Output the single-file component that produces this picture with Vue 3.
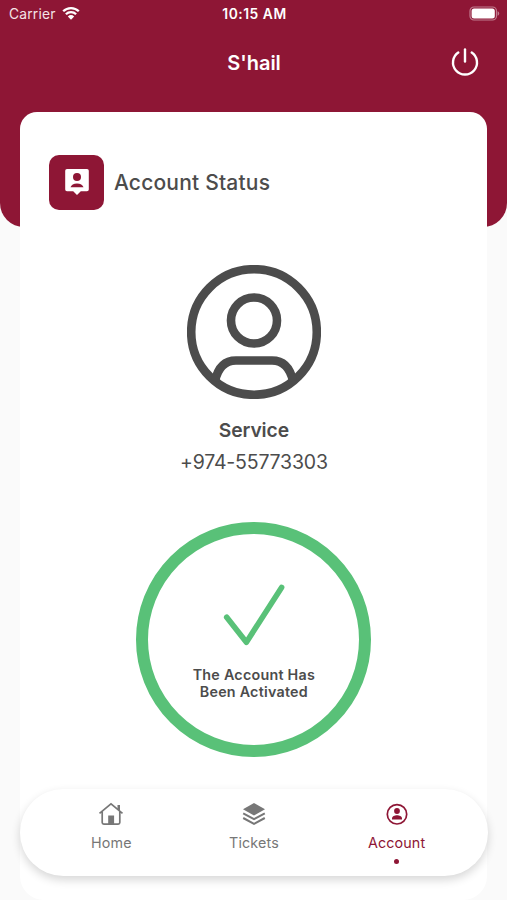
<script setup>
const tabs = [
  { id: 'home', label: 'Home' },
  { id: 'tickets', label: 'Tickets' },
  { id: 'account', label: 'Account' },
]
const activeTab = 'account'
</script>

<template>
  <div class="screen">
    <header class="top">
      <div class="status">
        <div class="carrier">
          <span>Carrier</span>
          <svg class="wifi" viewBox="0 0 18 14">
            <path d="M1.2 5.3a11 11 0 0 1 15.6 0" />
            <path d="M3.9 8.2a7.2 7.2 0 0 1 10.2 0" />
            <path class="solid" d="M9 13.8 5.8 10.4q3.2-2.7 6.4 0z" />
          </svg>
        </div>
        <span class="time">10:15 AM</span>
        <svg class="battery" viewBox="0 0 31 15">
          <rect class="shell" x="1" y="1" width="26.5" height="13" rx="4" />
          <rect class="charge" x="2.6" y="2.6" width="23.2" height="9.8" rx="2.5" />
          <path class="cap" d="M28.6 5.2q1.6.5 1.6 2.3t-1.6 2.3z" />
        </svg>
      </div>
      <div class="titlebar">
        <h1>S'hail</h1>
        <svg class="power" viewBox="0 0 28 28">
          <path d="M7.3 4.6A12 12 0 1 0 20.7 4.6" />
          <path d="M14 1.5v12" />
        </svg>
      </div>
    </header>

    <main class="card">
      <div class="heading">
        <div class="badge">
          <svg viewBox="0 0 24 26">
            <path class="paper" d="M2 0h20a1.8 1.8 0 0 1 1.8 1.8v18.6a1.8 1.8 0 0 1-1.8 1.8h-6.2L12 26l-3.8-3.8H2A1.8 1.8 0 0 1 .2 20.4V1.8A1.8 1.8 0 0 1 2 0z" />
            <circle cx="12" cy="8" r="4" />
            <path d="M5.5 18.3q1.3-3.900 6.500-3.900t6.500 3.900z" />
          </svg>
        </div>
        <h2>Account Status</h2>
      </div>

      <svg class="avatar" viewBox="0 0 134 134">
        <circle cx="67" cy="67" r="62.8" />
        <circle cx="67" cy="55.5" r="23" />
        <path d="M28 116C31 102.500 37.500 95.500 49 95.500H85C96.500 95.500 103 102.500 106 116" />
      </svg>
      <p class="service">Service</p>
      <p class="phone">+974-55773303</p>

      <div class="result">
        <svg class="check" viewBox="0 0 62 62">
          <path d="M3.7 33.3 23.4 58.2 58.6 3.4" />
        </svg>
        <p>The Account Has<br />Been Activated</p>
      </div>
    </main>

    <nav class="tabs">
      <div v-for="tab in tabs" :key="tab.id" class="tab" :class="{ active: tab.id === activeTab }">
        <svg v-if="tab.id === 'home'" viewBox="0 0 26 24">
          <path class="line" d="M1.5 11.3 13 1.8 24.5 11.3M4.2 9.6V20.5a1.6 1.6 0 0 0 1.6 1.6H20.2a1.6 1.6 0 0 0 1.6-1.6V9.6" />
          <path d="M19.5 3H22v6l-2.5-2zM10.2 13.5h5.900v8.500h-5.900z" />
        </svg>
        <svg v-else-if="tab.id === 'tickets'" viewBox="0 0 26 24">
          <path d="M13 1 24 7.200 13 13.400 2 7.200z" />
          <path class="line thin" d="M2.200 11.300 13 17.200 23.800 11.300M2.200 16 13 21.900 23.800 16" />
        </svg>
        <svg v-else viewBox="0 0 26 24">
          <circle class="line" cx="13" cy="12.300" r="9.700" />
          <circle cx="13" cy="9" r="2.900" />
          <path d="M8 17.600v-1.200c0-2 2.700-3.100 5-3.100s5 1.100 5 3.100v1.200z" />
        </svg>
        <span>{{ tab.label }}</span>
        <i v-if="tab.id === activeTab" class="dot"></i>
      </div>
    </nav>
  </div>
</template>

<style>
body {
  background: #fafafa;
}
</style>

<style scoped>
.screen {
  position: relative;
  width: 507px;
  height: 900px;
  overflow: hidden;
  background: #fafafa;
  color: #4c4c4c;
  font-family: Inter, "Liberation Sans", sans-serif;
}
h1, h2, p {
  margin: 0;
}
svg {
  display: block;
  flex: none;
}
.top {
  box-sizing: border-box;
  height: 227px;
  background: #8e1635;
  border-radius: 0 0 24px 24px;
  color: #fff;
}
.status {
  display: grid;
  grid-template-columns: 1fr auto 1fr;
  align-items: center;
  height: 27px;
  padding: 0 7px 0 9px;
  font-size: 13.8px;
}
.carrier {
  display: flex;
  align-items: center;
  gap: 6px;
  color: #f4e3e7;
  letter-spacing: 0.2px;
}
.wifi {
  width: 18px;
  height: 14px;
  margin-top: -1px;
  fill: none;
  stroke: #fff;
  stroke-width: 2.3;
}
.wifi .solid {
  fill: #fff;
  stroke: none;
}
.time {
  font-weight: 600;
  letter-spacing: 0.55px;
}
.battery {
  width: 31px;
  height: 15px;
  justify-self: end;
  margin-top: -1px;
}
.shell {
  fill: none;
  stroke: #c07d8f;
  stroke-width: 1.2;
}
.charge {
  fill: #fff;
}
.cap {
  fill: #c07d8f;
}
.titlebar {
  display: grid;
  grid-template-columns: 1fr auto 1fr;
  align-items: center;
  height: 71px;
  padding: 0 28px;
}
.titlebar h1 {
  grid-column: 2;
  padding-left: 1px;
  font-size: 20px;
  font-weight: 600;
  line-height: 24px;
}
.power {
  width: 28px;
  height: 28px;
  justify-self: end;
  margin-top: -1px;
  fill: none;
  stroke: #fff;
  stroke-width: 2.4;
  stroke-linecap: round;
}
.card {
  box-sizing: border-box;
  display: flex;
  flex-direction: column;
  align-items: center;
  width: 467px;
  height: 788px;
  margin: -115px auto 0 20.4px;
  padding-top: 42.5px;
  background: #fff;
  border-radius: 17px 17px 24px 24px;
}
.heading {
  display: flex;
  align-items: center;
  align-self: stretch;
  gap: 9.5px;
  padding-left: 29px;
}
.badge {
  display: flex;
  align-items: center;
  justify-content: center;
  width: 55px;
  height: 55px;
  border-radius: 10px;
  background: #8e1635;
}
.badge svg {
  width: 24px;
  height: 26px;
  fill: #8e1635;
}
.badge .paper {
  fill: #fff;
}
.heading h2 {
  padding-top: 1px;
  font-size: 21px;
  font-weight: 500;
  line-height: 26px;
  letter-spacing: 0.2px;
}
.avatar {
  width: 134px;
  height: 134px;
  margin-top: 55px;
  fill: none;
  stroke: #4c4c4c;
  stroke-width: 8.6;
}
.service {
  margin-top: 17.5px;
  font-size: 19.3px;
  font-weight: 600;
  line-height: 28px;
  letter-spacing: -0.1px;
}
.phone {
  margin-top: 3.5px;
  font-size: 19.5px;
  line-height: 28px;
  letter-spacing: -0.2px;
}
.result {
  box-sizing: border-box;
  display: flex;
  flex-direction: column;
  align-items: center;
  width: 235px;
  height: 235px;
  margin-top: 46px;
  padding-top: 50.5px;
  border: 12px solid #59c178;
  border-radius: 50%;
}
.check {
  width: 62px;
  height: 62px;
  fill: none;
  stroke: #59c178;
  stroke-width: 5.6;
  stroke-linecap: round;
  stroke-linejoin: round;
}
.result p {
  margin-top: 20px;
  font-size: 14.3px;
  font-weight: 600;
  line-height: 17px;
  letter-spacing: 0.25px;
  text-align: center;
}
.tabs {
  position: absolute;
  left: 20px;
  top: 789px;
  box-sizing: border-box;
  display: grid;
  grid-template-columns: repeat(3, 142.6px);
  justify-content: center;
  width: 468px;
  height: 87px;
  padding-top: 13px;
  border-radius: 43.5px;
  background: #fff;
  box-shadow: 0 4px 10px rgba(0, 0, 0, 0.16);
}
.tab {
  display: flex;
  flex-direction: column;
  align-items: center;
  color: #777;
  fill: currentColor;
  font-size: 14.3px;
  letter-spacing: 0.15px;
}
.tab svg {
  width: 26px;
  height: 24px;
}
.tab span {
  margin-top: 7px;
  line-height: 20px;
}
.tab .line {
  fill: none;
  stroke: currentColor;
  stroke-width: 1.7;
}
.tab .thin {
  stroke-width: 2;
}
.tab.active {
  color: #8e1635;
}
.dot {
  width: 5px;
  height: 5px;
  margin-top: 6px;
  border-radius: 50%;
  background: #8e1635;
}
</style>
